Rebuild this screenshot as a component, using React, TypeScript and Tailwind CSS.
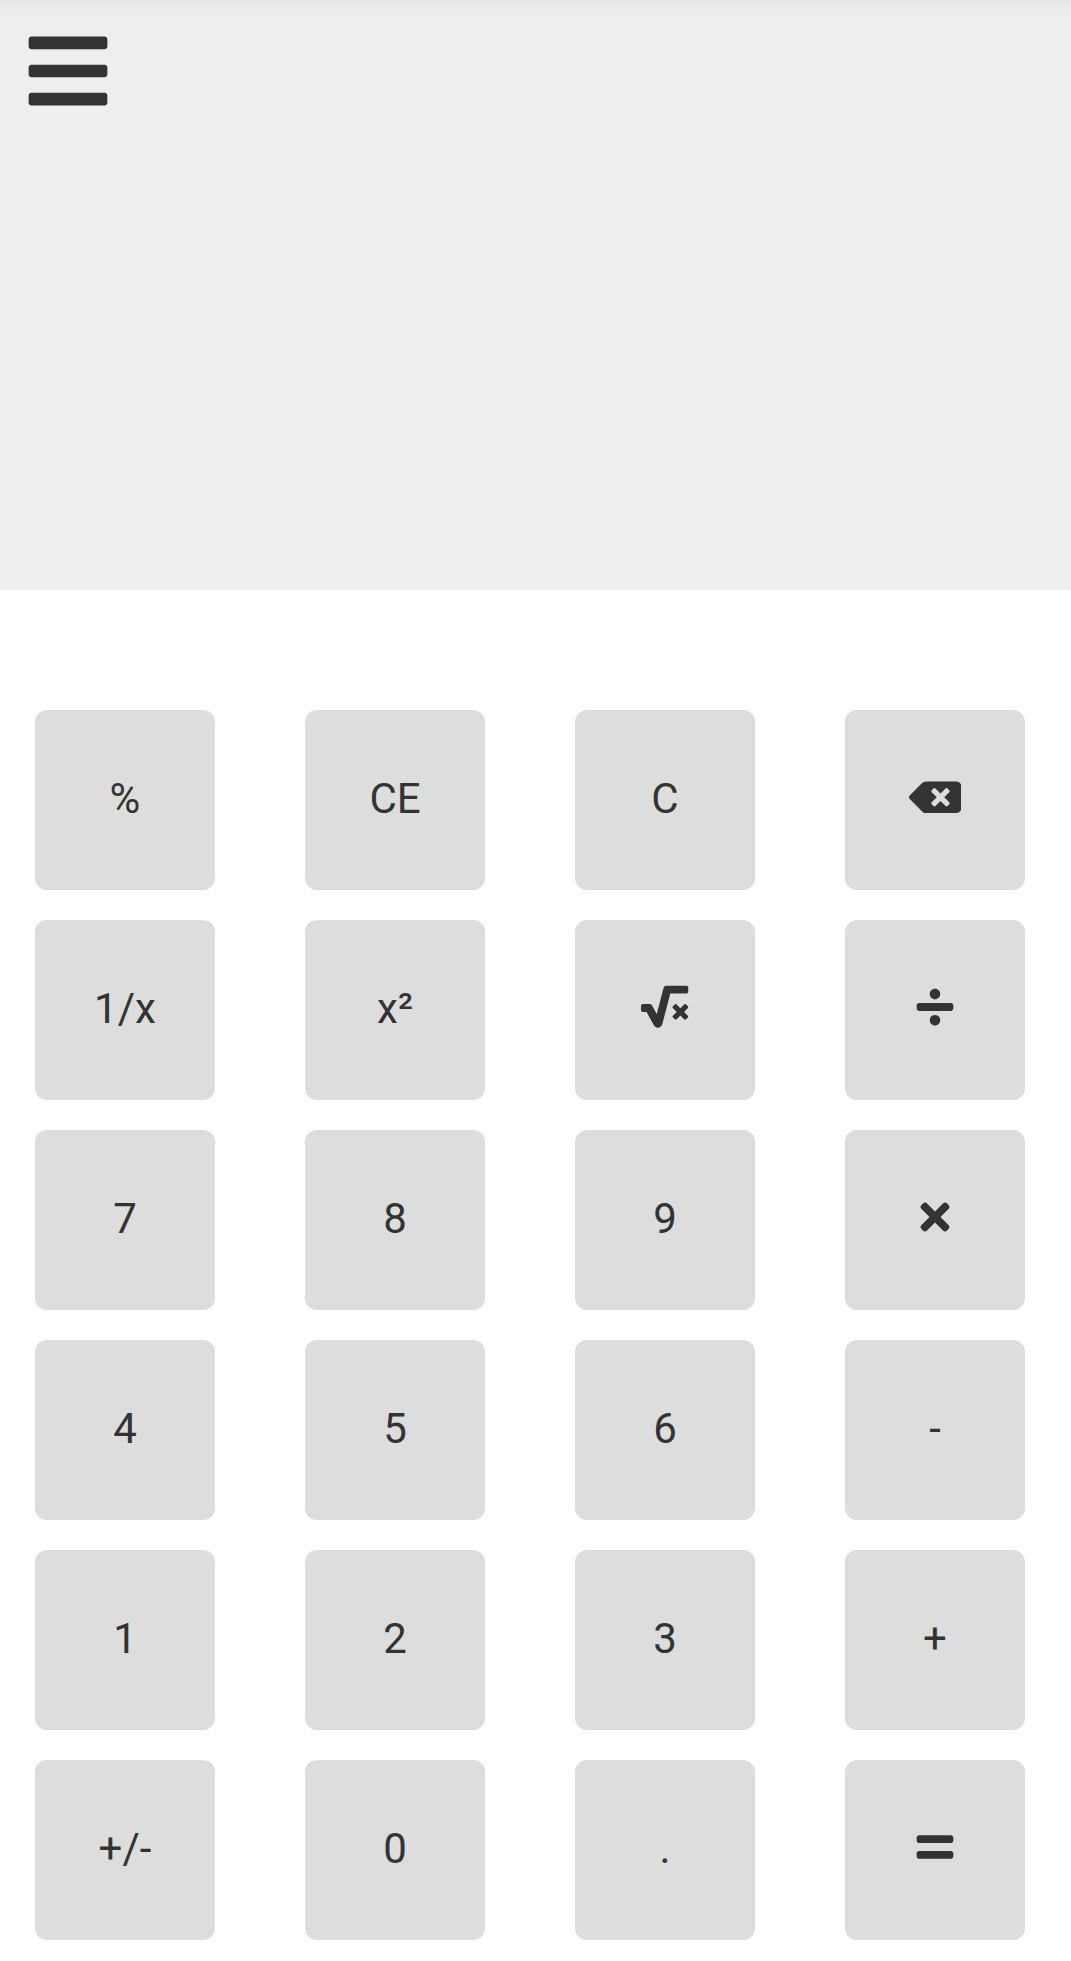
import { FaBackspace, FaBars, FaDivide, FaEquals, FaSquareRootAlt, FaTimes } from 'react-icons/fa'
import type { ReactNode } from 'react'

const keys: ReactNode[] = [
  '%', 'CE', 'C', <FaBackspace className="mb-[3px] text-[52.5px]" />,
  '1/x', 'x²', <FaSquareRootAlt className="mb-[3px] text-[47.25px]" />, <FaDivide className="mb-[3px] text-[42px]" />,
  '7', '8', '9', <FaTimes className="mb-[3px] text-[42px]" />,
  '4', '5', '6', '-',
  '1', '2', '3', '+',
  '+/-', '0', '.', <FaEquals className="mb-[3px] text-[42px]" />,
]

export default function App() {
  return (
    <div className="min-h-[1961px] bg-white font-['Roboto',sans-serif] text-[#333]">
      <div className="h-[590px] bg-[linear-gradient(#e5e5e5,#eeeeee_12px)] pl-[23px] pt-[26px]">
        <FaBars className="text-[90px]" />
      </div>
      <div className="grid grid-cols-[repeat(4,180px)] gap-x-[90px] gap-y-[30px] pl-[35px] pt-[120px]">
        {keys.map((key, i) => (
          <button key={i} className="flex h-[180px] w-[180px] items-center justify-center rounded-[12px] bg-[#ddd] pb-[3px] text-[42px]">
            {key}
          </button>
        ))}
      </div>
    </div>
  )
}
